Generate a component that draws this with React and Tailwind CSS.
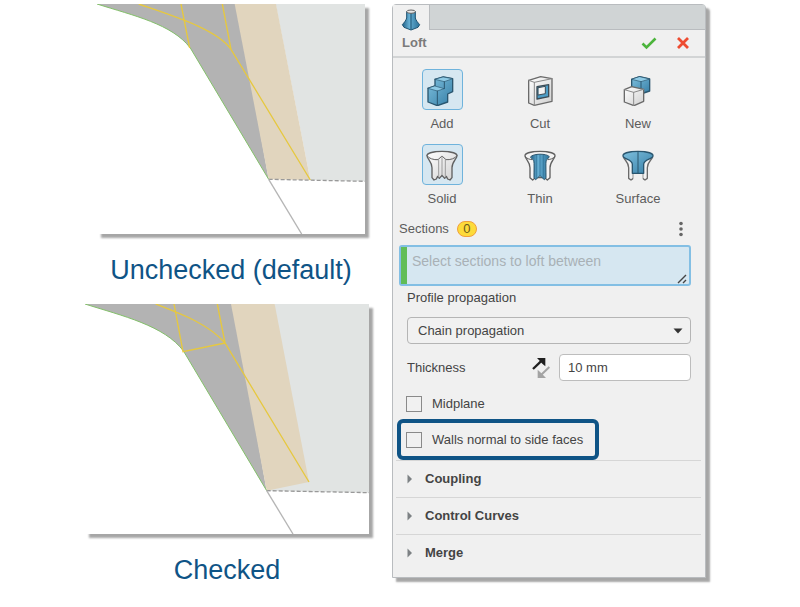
import { useState } from 'react'

const OPERATIONS = [
  { id: 'add', label: 'Add', Icon: AddIcon },
  { id: 'cut', label: 'Cut', Icon: CutIcon },
  { id: 'new', label: 'New', Icon: NewIcon },
]

const KINDS = [
  { id: 'solid', label: 'Solid', Icon: SolidIcon },
  { id: 'thin', label: 'Thin', Icon: ThinIcon },
  { id: 'surface', label: 'Surface', Icon: SurfaceIcon },
]

const GROUPS = ['Coupling', 'Control Curves', 'Merge']

/* Shared gradients for the feature icons */
function Gradients() {
  return (
    <svg className="absolute size-0" aria-hidden="true">
      <defs>
        <linearGradient id="blue" x1="0" y1="0" x2="1" y2="1">
          <stop offset="0" stopColor="#7fc0de" />
          <stop offset="1" stopColor="#357ea6" />
        </linearGradient>
        <linearGradient id="deep" x1="0" y1="0" x2="1" y2="0">
          <stop offset="0" stopColor="#1f5f86" />
          <stop offset="0.4" stopColor="#67b0d4" />
          <stop offset="1" stopColor="#2b7199" />
        </linearGradient>
        <linearGradient id="steel" x1="0" y1="0" x2="1" y2="1">
          <stop offset="0" stopColor="#ffffff" />
          <stop offset="1" stopColor="#d0d0d0" />
        </linearGradient>
      </defs>
    </svg>
  )
}

function IconSvg({ children }) {
  return (
    <svg viewBox="0 0 96 96" className="size-8" strokeWidth="4" strokeLinejoin="round" strokeLinecap="round" aria-hidden="true">
      {children}
    </svg>
  )
}

function AddIcon() {
  return (
    <IconSvg>
      <g stroke="#2a566f" fill="url(#blue)">
        <path d="M27 16 52 9 80 14V53L65 60V84L34 95 6 84V43L27 36Z" />
        <path d="M27 16 55 23 80 14 52 9Z" fill="#8ecae5" strokeWidth="2" />
        <path d="M6 43 34 51 54 44 27 36Z" fill="#8ecae5" strokeWidth="2" />
        <path d="M34 51V95M55 23V44" fill="none" strokeWidth="3" />
      </g>
    </IconSvg>
  )
}

function CutIcon() {
  return (
    <IconSvg>
      <g stroke="#6a6a6a">
        <path d="M14 19 50 8 84 14V82L31 94 14 87Z" fill="url(#steel)" />
        <path d="M14 19 31 25 84 14M31 25V94" fill="none" stroke="#8a8a8a" strokeWidth="3" />
        <path d="M39 38 74 32V68L39 75Z" fill="#4d9dc6" stroke="#3b4b55" />
        <path d="M43 41 64 37V59L43 63Z" fill="#f3f3f3" stroke="#3b4b55" strokeWidth="3" />
      </g>
    </IconSvg>
  )
}

function NewIcon() {
  return (
    <IconSvg>
      <g stroke="#2a566f" fill="url(#blue)">
        <path d="M29 16 53 8 83 15V51L56 60 29 51Z" />
        <path d="M29 16 57 23 83 15 53 8Z" fill="#8ecae5" strokeWidth="2" />
        <path d="M57 23V58" fill="none" strokeWidth="3" />
      </g>
      <g stroke="#6a6a6a" fill="url(#steel)">
        <path d="M7 47 29 38 65 46V82L36 95 7 84Z" />
        <path d="M7 47 35 55 65 46M35 55V95" fill="none" stroke="#8a8a8a" strokeWidth="3" />
      </g>
    </IconSvg>
  )
}

function SolidIcon() {
  return (
    <IconSvg>
      <g stroke="#606060">
        <path d="M3 20C3 3 93 3 93 20C93 29 78 38 78 56V86L72 93 65 90 61 82 56 88 48 79 40 88 35 82 31 90 24 93 18 86V56C18 38 3 29 3 20Z" fill="url(#steel)" />
        <path d="M3 20C8 29 24 33 36 32L48 21 60 32C72 33 88 29 93 20" fill="none" strokeWidth="3" />
        <path d="M48 22V77M38 33V84M58 33V84" fill="none" stroke="#9c9c9c" strokeWidth="3" />
      </g>
    </IconSvg>
  )
}

function ThinIcon() {
  return (
    <IconSvg>
      <g stroke="#606060">
        <path d="M3 20C3 3 93 3 93 20C93 29 78 38 78 56V86L70 93 62 86H34L26 93 18 86V56C18 38 3 29 3 20Z" fill="#f4f4f4" />
        <path d="M20 23C28 13 68 13 76 23L70 31C64 34 66 44 66 86L61 92 48 80 35 92 30 86C30 44 32 34 26 31Z" fill="url(#deep)" stroke="#2a566f" strokeWidth="3" />
        <path d="M48 17V80M38 19V86M58 19V86" fill="none" stroke="#2a6e94" strokeWidth="2" />
        <path d="M4 23C8 29 16 31 24 32M92 23C88 29 80 31 72 32" fill="none" strokeWidth="3" />
      </g>
    </IconSvg>
  )
}

function SurfaceIcon() {
  return (
    <IconSvg>
      <path d="M4 24C8 34 20 40 20 56V88L27 93 34 88V70H62V88L69 93 76 88V56C76 40 88 34 92 24" fill="#f2f2f2" stroke="#6a6a6a" />
      <path d="M34 72H62V96H34Z" fill="#f0f0f0" />
      <path d="M3 20C3 3 93 3 93 20C93 31 65 30 65 46V73H31V46C31 30 3 31 3 20Z" fill="url(#blue)" stroke="#2a566f" />
      <path d="M48 8V72" stroke="#2a566f" strokeWidth="3" />
    </IconSvg>
  )
}

function LoftIcon() {
  return (
    <svg viewBox="0 0 60 66" className="h-[22px] w-5" aria-hidden="true">
      <path d="M17 8V27C15 35 9 41 4 47L9 55 30 63 51 55 56 47C51 41 45 35 43 27V8Z" fill="url(#deep)" stroke="#1f5472" strokeWidth="3" strokeLinejoin="round" />
      <path d="M30 12V62" stroke="#1f5472" strokeWidth="3" />
      <ellipse cx="30" cy="8" rx="13" ry="5" fill="#e8e8e8" stroke="#606060" strokeWidth="3" />
    </svg>
  )
}

function FlipIcon() {
  return (
    <svg viewBox="0 0 60 66" className="h-[22px] w-5" aria-hidden="true">
      <path d="M6 36 32 11" stroke="#1f1f1f" strokeWidth="7" />
      <path d="M18 3H43V28L34 20 26 11Z" fill="#1f1f1f" />
      <path d="M55 30 30 54" stroke="#a3a3a3" strokeWidth="6" />
      <path d="M20 38V63H45L37 55 28 46Z" fill="#a3a3a3" />
    </svg>
  )
}

/* Section view with walls cut parallel to the end plane */
function UncheckedDrawing() {
  return (
    <svg viewBox="0 0 804 690" className="block h-auto w-full bg-white shadow-[4px_4px_2px_rgb(0_0_0/0.35)]" role="img" aria-label="Walls not normal to side faces">
      <path d="M536 0H804V532L640 528Z" fill="#e1e4e3" />
      <path d="M0 0H420L515 526 280 132C225 60 110 35 0 0Z" fill="#b3b3b3" />
      <path d="M413 0H537L640 528 515 526Z" fill="#e1d5be" />
      <path d="M0 0C110 35 225 60 280 132L515 526" fill="none" stroke="#83c06a" strokeWidth="3" />
      <path d="M125 0C225 35 360 75 402 136L640 528M252 0 278 132M376 0 402 136" fill="none" stroke="#e6c83f" strokeWidth="4" />
      <path d="M515 526 804 532" stroke="#999999" strokeWidth="4" strokeDasharray="12 6" />
      <path d="M515 526 614 690" stroke="#b5b5b5" strokeWidth="4" />
    </svg>
  )
}

/* Same view with the walls square to the side faces */
function CheckedDrawing() {
  return (
    <svg viewBox="0 0 852 690" className="block h-auto w-full bg-white shadow-[4px_4px_2px_rgb(0_0_0/0.35)]" role="img" aria-label="Walls normal to side faces">
      <path d="M568 0H852V566L545 560Z" fill="#e1e4e3" />
      <path d="M0 0H445L545 560 296 142C240 65 110 35 0 0Z" fill="#b3b3b3" />
      <path d="M438 0H569L672 534 545 560Z" fill="#e1d5be" />
      <path d="M0 0C110 35 240 65 296 142L545 560" fill="none" stroke="#83c06a" strokeWidth="3" />
      <path d="M212 0C290 30 370 60 420 117L672 534M267 0 294 143 420 117M397 0 420 117" fill="none" stroke="#e6c83f" strokeWidth="4" />
      <path d="M545 560 852 566" stroke="#999999" strokeWidth="4" strokeDasharray="12 6" />
      <path d="M545 560 624 690" stroke="#b5b5b5" strokeWidth="4" />
    </svg>
  )
}

function Figure({ caption, className, children }) {
  return (
    <figure className={className}>
      {children}
      <figcaption className="mt-4 text-center text-[27px] leading-10 text-[#0f5486]">
        {caption}
      </figcaption>
    </figure>
  )
}

function OptionGrid({ options, value, onChange }) {
  return (
    <div className="grid grid-cols-3 pr-[18px]">
      {options.map(({ id, label, Icon }) => (
        <button key={id} type="button" aria-pressed={value === id} onClick={() => onChange(id)} className="flex flex-col items-center gap-1.5">
          <span className={`flex size-[41px] items-center justify-center rounded-sm border ${value === id ? 'border-[#6fb3dc] bg-[#d6e7f1]' : 'border-transparent'}`}>
            <Icon />
          </span>
          <span className="leading-4 text-[#5c5c5c]">{label}</span>
        </button>
      ))}
    </div>
  )
}

function CheckRow({ label }) {
  return (
    <label className="flex items-center gap-2.5 leading-4">
      <input type="checkbox" className="size-4 appearance-none border border-[#8a8a8a] bg-[#f1f1f1] checked:bg-[#1a5586]" />
      {label}
    </label>
  )
}

function LoftPanel() {
  const [operation, setOperation] = useState('add')
  const [kind, setKind] = useState('solid')

  return (
    <section className="min-w-0 rounded-t-sm border border-[#b9bcbf] bg-[#f0f0f0] text-[13px] text-[#444444] shadow-[4px_4px_2px_rgb(0_0_0/0.35)]">
      <div className="flex h-[25px] bg-[#d0d4d5]">
        <button type="button" aria-label="Loft" className="flex w-[37px] items-center justify-center border-r border-[#b9bcbf] bg-[#f0f0f0] pt-1">
          <LoftIcon />
        </button>
        <div className="flex-1 border-b border-[#b9bcbf]" />
      </div>

      <header className="flex h-7 items-center border-b-2 border-[#d2d4d5] pr-3.5 pl-[9px]">
        <h1 className="flex-1 font-bold text-[#7b7b7b]">Loft</h1>
        <button type="button" aria-label="Accept" className="mr-[18px]">
          <svg viewBox="0 0 16 16" className="size-4" fill="none" stroke="#4cb43c" strokeWidth="2.6" aria-hidden="true">
            <path d="M1.500 8.500 5.500 12.500 14.500 3.500" />
          </svg>
        </button>
        <button type="button" aria-label="Cancel">
          <svg viewBox="0 0 16 16" className="size-4" fill="none" stroke="#ee4c31" strokeWidth="2.8" aria-hidden="true">
            <path d="M3 3 13 13M13 3 3 13" />
          </svg>
        </button>
      </header>

      <div className="flex flex-col gap-3 pt-[11px]">
        <OptionGrid options={OPERATIONS} value={operation} onChange={setOperation} />
        <OptionGrid options={KINDS} value={kind} onChange={setKind} />
      </div>

      <div className="mt-3.5 pr-3.5 pl-1.5">
        <div className="flex h-4 items-center">
          <label htmlFor="sections" className="text-[#5c5c5c]">Sections</label>
          <span className="ml-2 flex h-4 w-5 items-center justify-center rounded-full border border-[#f0a03c] bg-[#fddb3a] text-[#6b5a1a]">0</span>
          <button type="button" aria-label="Section options" className="mr-1 ml-auto">
            <svg viewBox="0 0 12 16" className="h-4 w-3" fill="#666666" aria-hidden="true">
              <circle cx="6" cy="2.500" r="1.800" />
              <circle cx="6" cy="8" r="1.800" />
              <circle cx="6" cy="13.500" r="1.800" />
            </svg>
          </button>
        </div>
        <div className="relative mt-2 flex h-[41px] rounded-[3px] border-2 border-[#83bfe4] bg-[#d6e7f1]">
          <span className="w-[6px] bg-[#62bd57]" />
          <textarea id="sections" placeholder="Select sections to loft between" className="min-w-0 flex-1 resize-none overflow-hidden pt-1 pl-[5px] text-sm placeholder:text-[#a9b1b6]" />
          <svg viewBox="0 0 10 10" className="pointer-events-none absolute right-0.5 bottom-0 size-2.5" stroke="#444444" strokeWidth="1.4" aria-hidden="true">
            <path d="M1 9 9 1M6 9 9 6" />
          </svg>
        </div>
      </div>

      <div className="px-3.5">
        <label htmlFor="propagation" className="mt-1 block leading-4">Profile propagation</label>
        <div className="relative mt-[11px]">
          <select id="propagation" className="h-[27px] w-full appearance-none rounded-sm border border-[#b5b5b5] bg-[#f1f1f1] px-2.5">
            <option>Chain propagation</option>
          </select>
          <svg viewBox="0 0 10 6" className="pointer-events-none absolute top-[11px] right-2 h-1.5 w-2.5" fill="#333333" aria-hidden="true">
            <path d="M0.500 0.500h9L5 5.500z" />
          </svg>
        </div>
        <div className="mt-2.5 flex h-[27px] items-center">
          <label htmlFor="thickness" className="flex-1">Thickness</label>
          <button type="button" aria-label="Flip direction" className="mr-2">
            <FlipIcon />
          </button>
          <input id="thickness" type="text" defaultValue="10 mm" className="h-[27px] w-[132px] rounded-sm border border-[#bdbdbd] bg-white px-2" />
        </div>
      </div>

      <div className="mt-[15px] pl-[13px]">
        <CheckRow label="Midplane" />
      </div>
      <div className="mt-[7px] ml-1 flex h-[41px] w-fit items-center rounded-md border-4 border-[#0f5486] pr-3 pl-[5px]">
        <CheckRow label="Walls normal to side faces" />
      </div>

      <div className="mr-1 ml-[3px] pb-1.5">
        {GROUPS.map(name => (
          <button key={name} type="button" aria-expanded="false" className="flex h-[37px] w-full items-center border-t border-[#d6d6d6] pl-[11px] font-bold">
            <svg viewBox="0 0 6 10" className="mr-3 h-2.5 w-1.5" fill="#7d8184" aria-hidden="true">
              <path d="M0.500 0.500V9.500L5 5z" />
            </svg>
            {name}
          </button>
        ))}
      </div>
    </section>
  )
}

export default function App() {
  return (
    <main className="grid min-h-screen grid-cols-[284fr_314fr] items-start gap-x-[23px] bg-white pt-1 pr-[94px] pl-[85px] font-['Liberation_Sans',Arial,sans-serif]">
      <Gradients />
      <div className="flex min-w-0 flex-col gap-3.5">
        <Figure caption="Unchecked (default)" className="pr-1 pl-3">
          <UncheckedDrawing />
        </Figure>
        <Figure caption="Checked">
          <CheckedDrawing />
        </Figure>
      </div>
      <LoftPanel />
    </main>
  )
}
